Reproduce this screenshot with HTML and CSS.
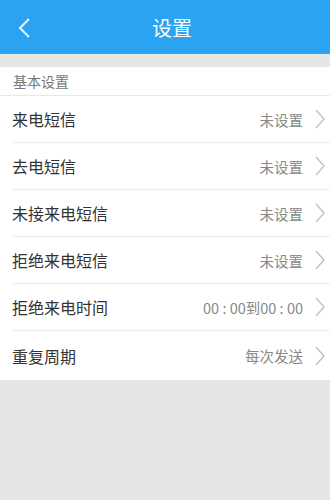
FILE: index.html
```html
<!DOCTYPE html>
<html>
<head>
<meta charset="utf-8">
<link rel="stylesheet" href="styles.css">
</head>
<body>
<div class="header">
  <svg class="back" width="14" height="22" viewBox="0 0 14 22"><path d="M12 2 L3 11 L12 20" fill="none" stroke="#e8f5fe" stroke-width="2"/></svg>
  <div class="title">设置</div>
</div>
<div class="gap"></div>
<div class="section">
  <div class="section-title">基本设置</div>
  <div class="row"><span class="label">来电短信</span><span class="value">未设置</span><svg class="chev" width="10" height="20" viewBox="0 0 10 20"><path d="M1 1 L9 10 L1 19" fill="none" stroke="#c4c4c4" stroke-width="1.5"/></svg></div>
  <div class="row"><span class="label">去电短信</span><span class="value">未设置</span><svg class="chev" width="10" height="20" viewBox="0 0 10 20"><path d="M1 1 L9 10 L1 19" fill="none" stroke="#c4c4c4" stroke-width="1.5"/></svg></div>
  <div class="row"><span class="label">未接来电短信</span><span class="value">未设置</span><svg class="chev" width="10" height="20" viewBox="0 0 10 20"><path d="M1 1 L9 10 L1 19" fill="none" stroke="#c4c4c4" stroke-width="1.5"/></svg></div>
  <div class="row"><span class="label">拒绝来电短信</span><span class="value">未设置</span><svg class="chev" width="10" height="20" viewBox="0 0 10 20"><path d="M1 1 L9 10 L1 19" fill="none" stroke="#c4c4c4" stroke-width="1.5"/></svg></div>
  <div class="row"><span class="label">拒绝来电时间</span><span class="value">00 : 00到00 : 00</span><svg class="chev" width="10" height="20" viewBox="0 0 10 20"><path d="M1 1 L9 10 L1 19" fill="none" stroke="#c4c4c4" stroke-width="1.5"/></svg></div>
  <div class="row last"><span class="label">重复周期</span><span class="value">每次发送</span><svg class="chev" width="10" height="20" viewBox="0 0 10 20"><path d="M1 1 L9 10 L1 19" fill="none" stroke="#c4c4c4" stroke-width="1.5"/></svg></div>
</div>
</body>
</html>
```
FILE: styles.css
```css
html, body {
  margin: 0;
  padding: 0;
  background: #e6e6e6;
  font-family: "Noto Sans CJK SC", "Noto Sans", sans-serif;
  height: 100%;
}
.header {
  height: 54px;
  background: #2aa4f0;
  display: flex;
  align-items: center;
  justify-content: center;
  position: relative;
}
.back {
  position: absolute;
  left: 17px;
  top: 17px;
}
.title {
  color: #fff;
  font-size: 20px;
  margin-left: 14px;
}
.gap {
  height: 13px;
}
.section {
  background: #fff;
}
.section-title {
  height: 28px;
  line-height: 28px;
  padding-left: 13px;
  font-size: 14px;
  color: #777;
  border-bottom: 1px solid #e8e8e8;
}
.row {
  height: 46px;
  margin-left: 12px;
  border-bottom: 1px solid #ececec;
  display: flex;
  align-items: center;
  padding-right: 5px;
}
.row.last {
  border-bottom: none;
  height: 49px;
}
.label {
  flex: 1;
  font-size: 16px;
  color: #333;
}
.value {
  font-size: 14.5px;
  color: #888;
  margin-right: 12px;
}
.chev {
  display: block;
}
```
